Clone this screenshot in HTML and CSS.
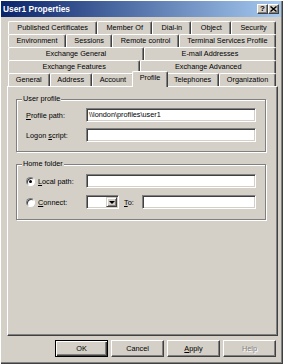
FILE: index.html
```html
<!DOCTYPE html>
<html>
<head>
<meta charset="utf-8">
<link rel="stylesheet" href="styles.css">
</head>
<body>
<div class="window">
  <div class="titlebar">
    <span class="title">User1 Properties</span>
    <div class="tb-buttons">
      <span class="tb-btn help-q">?</span>
      <span class="tb-btn"><svg width="7" height="6" viewBox="0 0 7 6"><path d="M0.5 0.5 L6.5 5.5 M6.5 0.5 L0.5 5.5" stroke="#000" stroke-width="1.4"/></svg></span>
    </div>
  </div>

  <div class="tabs">
    <div class="tab-row">
      <span class="tab">Published Certificates</span>
      <span class="tab">Member Of</span>
      <span class="tab">Dial-in</span>
      <span class="tab">Object</span>
      <span class="tab">Security</span>
    </div>
    <div class="tab-row">
      <span class="tab">Environment</span>
      <span class="tab">Sessions</span>
      <span class="tab">Remote control</span>
      <span class="tab">Terminal Services Profile</span>
    </div>
    <div class="tab-row">
      <span class="tab">Exchange General</span>
      <span class="tab">E-mail Addresses</span>
    </div>
    <div class="tab-row">
      <span class="tab">Exchange Features</span>
      <span class="tab">Exchange Advanced</span>
    </div>
    <div class="tab-row">
      <span class="tab">General</span>
      <span class="tab">Address</span>
      <span class="tab">Account</span>
      <span class="tab active">Profile</span>
      <span class="tab">Telephones</span>
      <span class="tab">Organization</span>
    </div>
  </div>

  <div class="panel">
    <div class="group group-profile">
      <div class="legend">User profile</div>
      <div class="row first">
        <span class="label"><u>P</u>rofile path:</span>
        <span class="field">\\london\profiles\user1</span>
      </div>
      <div class="row second">
        <span class="label">Logon <u>s</u>cript:</span>
        <span class="field"></span>
      </div>
    </div>

    <div class="group group-home">
      <div class="legend">Home folder</div>
      <div class="row first">
        <span class="label radio-label"><span class="radio checked"></span><span><u>L</u>ocal path:</span></span>
        <span class="field"></span>
      </div>
      <div class="row third">
        <span class="label radio-label"><span class="radio"></span><span><u>C</u>onnect:</span></span>
        <span class="combo"><span class="drop"><span class="arrow"></span></span></span>
        <span class="to-label"><u>T</u>o:</span>
        <span class="field short"></span>
      </div>
    </div>
  </div>

  <div class="buttons">
    <span class="btn default">OK</span>
    <span class="btn">Cancel</span>
    <span class="btn"><u>A</u>pply</span>
    <span class="btn disabled">Help</span>
  </div>
</div>
</body>
</html>
```

FILE: styles.css
```css
html, body {
  margin: 0;
  padding: 0;
  background: #d4d0c8;
}

body {
  font-family: "Liberation Sans", Arial, sans-serif;
  font-size: 7.3px;
  color: #000;
}

.window {
  width: 283px;
  height: 364px;
  box-sizing: border-box;
  padding: 1px 2px 2px 1px;
  background: #d4d0c8;
  box-shadow: inset 1px 1px #ffffff, inset -1px -1px #404040, inset -2px -2px #808080;
  display: flex;
  flex-direction: column;
}

.titlebar {
  height: 16px;
  background: linear-gradient(to right, #0a246a, #a6caf0);
  display: flex;
  align-items: center;
  justify-content: space-between;
  padding: 0 2px 0 2px;
}

.title {
  color: #fff;
  font-weight: bold;
  font-size: 8.4px;
  line-height: 10px;
}

.tb-buttons {
  display: flex;
}

.tb-btn {
  width: 11px;
  height: 10px;
  box-sizing: border-box;
  background: #d4d0c8;
  border-top: 1px solid #fff;
  border-left: 1px solid #fff;
  border-right: 1px solid #404040;
  border-bottom: 1px solid #404040;
  box-shadow: inset -1px -1px #808080;
  display: flex;
  align-items: center;
  justify-content: center;
  font-weight: bold;
  font-size: 8px;
  line-height: 8px;
}

.tb-btn.help-q {
  margin-right: 0;
}

.tabs {
  margin: 4px 0 0 7px;
  width: 268px;
  display: flex;
  flex-direction: column;
}

.tab-row {
  display: flex;
  height: 13px;
}

.tab {
  flex: 1 1 auto;
  box-sizing: border-box;
  height: 13px;
  padding: 0 1px;
  text-align: center;
  line-height: 12px;
  white-space: nowrap;
  background: #d4d0c8;
  border-top: 1px solid #fff;
  border-left: 1px solid #fff;
  border-right: 1px solid #404040;
  box-shadow: inset -1px 0 #808080;
  border-top-left-radius: 2px;
  border-top-right-radius: 2px;
}

.tab.active {
  position: relative;
  z-index: 1;
  height: 16px;
  margin: -2px -2px -1px -2px;
  line-height: 12px;
}

.panel {
  margin-left: 6px;
  width: 271px;
  height: 250px;
  box-sizing: border-box;
  border-top: 1px solid #fff;
  border-left: 1px solid #fff;
  border-right: 1px solid #404040;
  border-bottom: 1px solid #404040;
  box-shadow: inset -1px -1px #808080;
  padding: 12px 0 0 8px;
}

.group {
  width: 250px;
  box-sizing: border-box;
  border: 1px solid #808080;
  box-shadow: inset 1px 1px #fff, 1px 1px #fff;
  padding: 0 8px 0 9px;
}

.group-profile {
  padding-bottom: 9px;
}

.group-home {
  margin-top: 12px;
  padding-bottom: 10px;
}

.legend {
  margin: -6px 0 0 -4px;
  width: fit-content;
  padding: 0 1px;
  height: 10px;
  line-height: 10px;
  background: #d4d0c8;
}

.row {
  display: flex;
  align-items: center;
  height: 14px;
}

.row.first {
  margin-top: 4px;
}

.group-home .row.first {
  margin-top: 5px;
}

.row.second {
  margin-top: 6px;
}

.row.third {
  margin-top: 7px;
}

.label {
  width: 60px;
  flex: none;
  white-space: nowrap;
}

.radio-label {
  display: flex;
  align-items: center;
  gap: 3px;
}

.radio {
  width: 9px;
  height: 9px;
  box-sizing: border-box;
  border-radius: 50%;
  background: #fff;
  border: 1px solid;
  border-color: #808080 #fff #fff #808080;
  box-shadow: inset 1px 1px #404040;
  display: flex;
  align-items: center;
  justify-content: center;
}

.radio.checked::after {
  content: "";
  width: 3px;
  height: 3px;
  border-radius: 50%;
  background: #000;
}

.field {
  width: 170px;
  height: 14px;
  box-sizing: border-box;
  background: #fff;
  border-top: 1px solid #808080;
  border-left: 1px solid #808080;
  border-right: 1px solid #fff;
  border-bottom: 1px solid #fff;
  box-shadow: inset 1px 1px #404040, inset -1px -1px #d4d0c8;
  padding: 0 2px;
  line-height: 12px;
  white-space: nowrap;
}

.field.short {
  width: 114px;
}

.combo {
  width: 33px;
  height: 14px;
  box-sizing: border-box;
  background: #fff;
  border-top: 1px solid #808080;
  border-left: 1px solid #808080;
  border-right: 1px solid #fff;
  border-bottom: 1px solid #fff;
  box-shadow: inset 1px 1px #404040, inset -1px -1px #d4d0c8;
  padding: 1px;
  display: flex;
  justify-content: flex-end;
}

.drop {
  width: 11px;
  height: 10px;
  box-sizing: border-box;
  background: #d4d0c8;
  border-top: 1px solid #d4d0c8;
  border-left: 1px solid #d4d0c8;
  border-right: 1px solid #404040;
  border-bottom: 1px solid #404040;
  box-shadow: inset 1px 1px #fff, inset -1px -1px #808080;
  display: flex;
  align-items: center;
  justify-content: center;
}

.arrow {
  width: 0;
  height: 0;
  border-left: 3px solid transparent;
  border-right: 3px solid transparent;
  border-top: 3px solid #000;
}

.to-label {
  margin-left: 5px;
  width: 18px;
  flex: none;
}

.buttons {
  margin-top: 4px;
  margin-right: 5px;
  display: flex;
  justify-content: flex-end;
  gap: 3px;
}

.btn {
  width: 53px;
  height: 17px;
  box-sizing: border-box;
  background: #d4d0c8;
  border-top: 1px solid #fff;
  border-left: 1px solid #fff;
  border-right: 1px solid #404040;
  border-bottom: 1px solid #404040;
  box-shadow: inset -1px -1px #808080;
  text-align: center;
  line-height: 15px;
}

.btn.default {
  border: 1px solid #000;
  box-shadow: inset 1px 1px #fff, inset -1px -1px #404040, inset -2px -2px #808080;
}

.btn.disabled {
  color: #808080;
  text-shadow: 1px 1px #fff;
}
```
